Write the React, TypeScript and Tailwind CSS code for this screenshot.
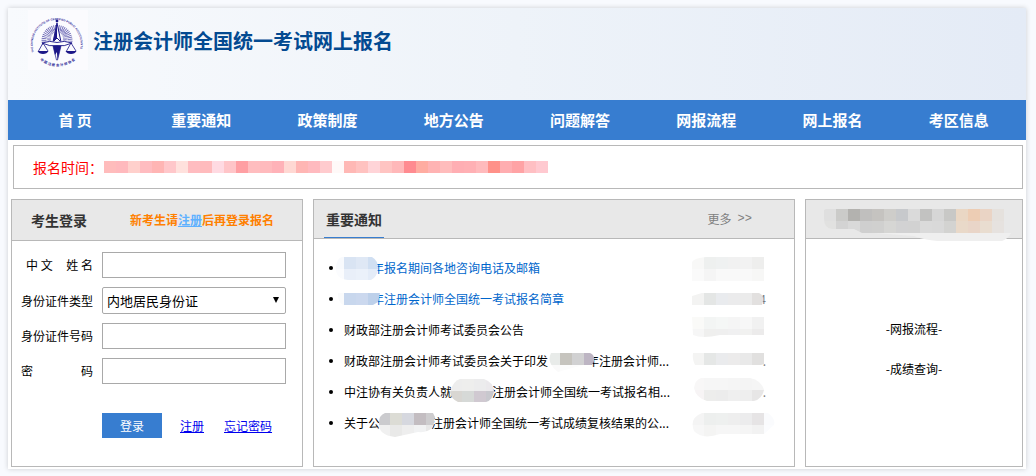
import React from 'react'

interface MosaicProps {
    rows: string[][]
    x: number
    y: number
    id: string
    clip: string
}

interface Notice {
    before: string
    after: string
    highlight?: boolean
    gap?: string
    mosaic?: MosaicProps
    tail?: string
    date: MosaicProps
}

const CELL = 12

const navItems = ['首 页', '重要通知', '政策制度', '地方公告', '问题解答', '网报流程', '网上报名', '考区信息']

const timeCells = [
    '#ffbcbc', '#ffb9bd', '#ffd0cc', '#ffbcc0', '#ffb5b4', '#ffc7ca', '#ffe1dd', '#ffbcc0', '#ffbbbd', '#ffdae2',
    '#ffc5c8', '#ff9fa3', '#ffbdbf', '#ffbabd', '#ffb2b8', '#ffd8d3', '#ffb6b4', '#ffbabf', '#ffcbce', '#fff9f8',
    '#ffb8b5', '#ffc2c0', '#ffd4d8', '#ffc4c2', '#ffb8b9', '#ff8b90', '#ffaca1', '#ffb3b3', '#ffbcbc', '#ffaeb3',
    '#ffb0b4', '#ffbabc', '#ff9189', '#ffadb0', '#ffa3a5', '#ffbfc3', '#ffc9d0',
]

const notices: Notice[] = [
    {
        before: '',
        after: '年报名期间各地咨询电话及邮箱',
        highlight: true,
        gap: 'w-7',
        mosaic: {
            id: 'n0', x: -12, y: -2,
            rows: [['#f8fafd', '#d9e4f3', '#dfe8f5', '#d0dff2'], ['#fbfcfe', '#e9eff9', '#ebf1fa', '#e4ecf8']],
            clip: 'M10 0H40Q46 3 46 12Q45 20 39 23H16Q3 22 4 10Q5 1 10 0Z',
        },
        date: {
            id: 'd0', x: 0, y: 5,
            rows: [['#f8f8f7', '#eef0ef', '#eff1f1', '#f1f1f1', '#f2f2f2', '#eeeeed'], ['#fafafa', '#f5f5f5', '#f9f9f9', '#f9f9f9', '#f9f9f9', '#f7f7f6']],
            clip: 'M0 5Q2 1 14 0H72V24H0Z',
        },
    },
    {
        before: '',
        after: '年注册会计师全国统一考试报名简章',
        highlight: true,
        gap: 'w-7',
        mosaic: {
            id: 'n1', x: -12, y: 3,
            rows: [['#fafbfc', '#c8d7ed', '#cbd8ee', '#bdd0ea']],
            clip: 'M6 0H48L46 9L41 12H11Q5 8 6 0Z',
        },
        tail: '4',
        date: {
            id: 'd1', x: 0, y: 10,
            rows: [['#f3f3f2', '#e4e6e5', '#e9ebee', '#ebebec', '#ebebeb', '#e2e0df']],
            clip: 'M0 3L10 0H67Q72 2 71 8L70 12H0Z',
        },
    },
    {
        before: '财政部注册会计师考试委员会公告',
        after: '',
        date: {
            id: 'd2', x: 0, y: 3,
            rows: [['#fafaf8', '#f3f5f4', '#f5f7f6', '#f5f5f5', '#f7f7f7', '#f1f1f1'], ['#f6f6f6', '#efefee', '#efefef', '#f0f0f1', '#f1f1f0', '#ecebeb']],
            clip: 'M0 0H72V18H28Q10 22 1 18Z',
        },
    },
    {
        before: '财政部注册会计师考试委员会关于印发',
        after: '年注册会计师...',
        gap: 'w-[39px]',
        mosaic: {
            id: 'n3', x: 0, y: 1,
            rows: [['#e8ebe9', '#c6c4be', '#d1d1d2', '#bdb5c3'], ['#fafafa', '#fcfcfc', '#fcfcfc', '#ffffff']],
            clip: 'M3 0H42Q47 2 46 8L44 12H36Q20 16 10 19Q-2 10 3 0Z',
        },
        tail: '.',
        date: {
            id: 'd3', x: 0, y: 8,
            rows: [['#f4f4f3', '#e5e7e6', '#eaebed', '#ecebeb', '#e9e9e9', '#e1e0df']],
            clip: 'M1 0H72V11L69 12H3Q0 6 1 0Z',
        },
    },
    {
        before: '中注协有关负责人就',
        after: '注册会计师全国统一考试报名相...',
        gap: 'w-10',
        mosaic: {
            id: 'n4', x: -2, y: -4,
            rows: [['#ededed', '#eeeeed', '#ececed', '#ebe9ec'], ['#d8d6d2', '#d6d9d7', '#d0c9d1', '#c8c8ce']],
            clip: 'M10 0H34Q43 3 44 12Q43 21 36 23H8Q1 20 0 13Q3 2 10 0Z',
        },
        tail: '.',
        date: {
            id: 'd4', x: 0, y: 2,
            rows: [['#f8f7f7', '#f6f6f6', '#f6f6f6', '#f5f5f5', '#f4f4f4', '#f5f5f5'], ['#f7f4f5', '#ededec', '#ececec', '#efefef', '#eeeeee', '#e7e6e6']],
            clip: 'M9 0H58Q69 2 72 12Q70 21 62 23H15Q4 20 2 10Q3 2 9 0Z',
        },
    },
    {
        before: '关于公',
        after: '注册会计师全国统一考试成绩复核结果的公...',
        gap: 'w-[51px]',
        mosaic: {
            id: 'n5', x: -2, y: -1,
            rows: [['#cbcbce', '#dcdcd5', '#d6d8df', '#c3bdc1', '#cdccce'], ['#f0f0f0', '#e9e9e8', '#eeeeee', '#f1f2f3', '#e8e8e8']],
            clip: 'M7 0H55L57 4L55 14Q50 20 40 19L17 24Q0 22 1 10Q1 2 7 0Z',
        },
        date: {
            id: 'd5', x: 0, y: 6,
            rows: [['#f4f4f4', '#edefee', '#eef0ef', '#eeeeee', '#ececed', '#e6e4e5', '#fafbfd'], ['#f7f7f7', '#f4f4f3', '#f6f6f6', '#f6f6f6', '#f5f5f5', '#f2f2f2', '#fbfcfe']],
            clip: 'M10 0H76Q84 6 82 12L72 21H28Q10 27 2 18Q-3 5 10 0Z',
        },
    },
]

const bannerRows = [
    ['#dfdfdf', '#cbcbc9', '#b3b2af', '#c0bfbe', '#c5c3c0', '#cecdca', '#c7c9cc', '#dadada', '#c2c2c1', '#d6d6d6', '#c8c8c6', '#ead7c4', '#edcdb4', '#ead4c5', '#e5e1dd'],
    ['#e1e1e0', '#d3d3d3', '#d9d9d9', '#cfcfcf', '#d0d0cf', '#d6d6d4', '#d2d2d3', '#d2d2d2', '#dadada', '#d9d9d9', '#d3d3d1', '#e9d9c9', '#e9d5c8', '#e9ddd0', '#e6e2df'],
]

const Mosaic: React.FC<MosaicProps> = ({ rows, x, y, id, clip }) => (
    <g transform={`translate(${x} ${y})`}>
        <clipPath id={id}>
            <path d={clip} />
        </clipPath>
        <g clipPath={`url(#${id})`} shapeRendering="crispEdges">
            {rows.map((row, r) =>
                row.map((fill, c) => (
                    <rect key={`${r}-${c}`} x={c * CELL} y={r * CELL} width={CELL} height={CELL} fill={fill} />
                ))
            )}
        </g>
    </g>
)

const Logo = () => (
    <svg viewBox="0 0 60 60" className="h-[60px] w-[60px] overflow-visible bg-[#fbfbfe]" aria-hidden="true">
        <defs>
            <path id="ring" d="M6 42A24 24 0 1 1 50.5 44" />
            <path id="foot" d="M12 50A27 27 0 0 0 50 47" />
        </defs>
        <g fill="#2c2596" fontFamily="Liberation Sans, Noto Sans CJK SC, sans-serif" fontWeight="bold">
            <text fontSize="2.8">
                <textPath href="#ring">THE CHINESE INSTITUTE OF CERTIFIED PUBLIC ACCOUNTANTS</textPath>
            </text>
            <text fontSize="3.4">
                <textPath href="#foot">中 国 注 册 会 计 师 协 会</textPath>
            </text>
        </g>
        {/* sun rays */}
        <g fill="none" stroke="#6a66b4">
            <path d="M16.5 34A13 13 0 1 1 41.5 34" strokeWidth="5" strokeDasharray="0.8 0.9" />
            <path d="M21.5 31A8 8 0 1 1 36.5 31" strokeWidth="4" strokeDasharray="0.6 0.7" />
        </g>
        {/* compass and blade */}
        <path d="M29 13L25 32L29 28L33 32Z" fill="#fbfbfe" stroke="#1c1788" strokeWidth="1" />
        <path d="M29 13L25 32L29 28Z" fill="#1c1788" />
        <circle cx="29" cy="11" r="1.4" fill="#1c1788" />
        <path d="M25 36H33L29.5 50H28.5Z" fill="#fbfbfe" stroke="#1c1788" strokeWidth="0.7" />
        <path d="M28.5 36H33L29.5 50Z" fill="#1c1788" />
        <path d="M25 36H29V42L27 45Z" fill="#1c1788" />
        {/* scales */}
        <path d="M14 33Q22 30 29 32.5Q36 30 44 33Q36 37 29 35.5Q22 37 14 33Z" fill="#fbfbfe" stroke="#1c1788" strokeWidth="0.9" />
        <path d="M15 33L10.5 41M15 33L20 41M43 33L38.5 41M43 33L48 41" fill="none" stroke="#1c1788" strokeWidth="0.8" />
        <path d="M9.5 41H20.5Q19 44 15 44T9.5 41ZM37.5 41H48.5Q47 44 43 44T37.5 41Z" fill="#1c1788" />
    </svg>
)

const Header = () => (
    <header className="flex h-[92px] items-start bg-linear-to-r from-[#f8fafd] via-[#eef3f9] to-[#e4ebf6] pt-0.5 pl-5">
        <Logo />
        <h1 className="mt-4 ml-[5px] text-xl leading-[30px] font-bold text-[#034a91]">注册会计师全国统一考试网上报名</h1>
    </header>
)

const Nav = () => (
    <nav className="grid h-10 grid-cols-8 items-center bg-[#377dd0] px-1 text-center text-[15px] font-bold text-white">
        {navItems.map((item) => (
            <a key={item} href="#">{item}</a>
        ))}
    </nav>
)

const fieldClass = 'h-[26px] w-full border border-[#a9a9a9] bg-white px-1 text-[13px] outline-none'

const LoginPanel = () => (
    <section className="border border-[#b8b8b8]">
        <div className="flex h-[41px] items-center justify-between border-b border-[#b8b8b8] bg-[#e8e8e8] pr-7 pl-[19px] font-bold">
            <h2 className="text-sm text-[#333]">考生登录</h2>
            <p className="text-xs text-[#ff8000]">
                新考生请<a href="#" className="text-[#5eb1ff] underline">注册</a>后再登录报名
            </p>
        </div>
        <form className="pt-[11px] pr-4 pb-7 pl-[9px]" onSubmit={(e) => e.preventDefault()}>
            <div className="grid grid-cols-[72px_1fr] items-center gap-x-[9px] gap-y-[9px]">
                <label htmlFor="name" className="flex justify-between pl-[5px]">
                    <span>中 文</span>
                    <span>姓 名</span>
                </label>
                <input id="name" type="text" className={fieldClass} />

                <label htmlFor="idType">身份证件类型</label>
                <div className="relative">
                    <select
                        id="idType"
                        className="block h-[27px] w-full appearance-none rounded-xs border border-[#a9a9a9] bg-white px-1 text-[13px] outline-none"
                    >
                        <option>内地居民身份证</option>
                    </select>
                    <svg viewBox="0 0 6 6" className="pointer-events-none absolute top-2.5 right-[7px] h-1.5 w-1.5">
                        <path d="M0 0H6L3 6Z" />
                    </svg>
                </div>

                <label htmlFor="idNumber">身份证件号码</label>
                <input id="idNumber" type="text" className={fieldClass} />

                <label htmlFor="password" className="flex justify-between">
                    <span>密</span>
                    <span>码</span>
                </label>
                <input id="password" type="password" className={fieldClass} />
            </div>
            <div className="mt-[29px] flex items-center pl-[81px]">
                <button type="submit" className="h-[25px] w-[60px] bg-[#377dd0] text-xs text-white">登录</button>
                <a href="#" className="ml-[18px] text-[#0000ee] underline">注册</a>
                <a href="#" className="ml-5 text-[#0000ee] underline">忘记密码</a>
            </div>
        </form>
    </section>
)

const NoticePanel = () => (
    <section className="border border-[#b8b8b8]">
        <div className="flex h-[39px] items-stretch justify-between border-b border-[#b8b8b8] bg-[#e8e8e8] pr-[42px] pl-2.5">
            <h2 className="flex items-center border-b border-[#377dd0] px-0.5 text-sm font-bold text-[#333]">重要通知</h2>
            <a href="#" className="flex items-center gap-1.5 text-[#808080]">
                更多<span className="font-['Liberation_Mono',monospace]">&gt;&gt;</span>
            </a>
        </div>
        <ul className="pt-[13px] pr-[18px] pl-[15px]">
            {notices.map((notice) => (
                <li key={notice.date.id} className="flex h-[31px] items-center">
                    <span className="mr-[11px] h-1 w-1 shrink-0 rounded-full bg-black" />
                    <a href="#" className={`flex items-center whitespace-nowrap ${notice.highlight ? 'text-[#0066cc]' : 'text-black'}`}>
                        {notice.before}
                        {notice.mosaic && (
                            <span className={`relative h-[18px] ${notice.gap}`}>
                                <svg className="absolute top-0 left-0 h-[18px] w-full overflow-visible">
                                    <Mosaic {...notice.mosaic} />
                                </svg>
                            </span>
                        )}
                        {notice.after}
                    </a>
                    <span className="relative ml-auto flex h-[31px] w-[84px] shrink-0 items-center justify-end pr-[10px] text-[#808080]">
                        {notice.tail}
                        <svg className="absolute inset-0 h-full w-full overflow-visible">
                            <Mosaic {...notice.date} />
                        </svg>
                    </span>
                </li>
            ))}
        </ul>
    </section>
)

const QuickPanel = () => (
    <section className="border border-[#b8b8b8]">
        <div className="relative h-[39px] border-b border-[#b8b8b8] bg-[#e8e8e8] pt-[9px] pl-[18px]">
            <svg viewBox="0 0 188 34" className="h-[34px] w-[188px]">
                <path d="M42 20L50 24L90 27Q96 30 113 32H178Q184 30 187 24H170Z" fill="#efefef" />
                <Mosaic id="banner" x={0} y={0} rows={bannerRows} clip="M2 0H180V24H38L30 20H8Q0 19 0 10V1Z" />
            </svg>
        </div>
        <div className="flex flex-col items-center pt-[70px] leading-10">
            <a href="#">-网报流程-</a>
            <a href="#">-成绩查询-</a>
        </div>
    </section>
)

export default function App() {
    return (
        <div className="min-h-screen bg-[#f8fafe] pt-2 pr-2.5 pb-[7px] pl-2 font-['Noto_Sans_CJK_SC',sans-serif] text-xs text-black">
            <div className="bg-white pb-0.5 shadow-[0_0_5px_rgba(0,0,0,0.18)]">
                <Header />
                <Nav />
                <div className="mt-[5px] mr-[3px] ml-[5px] flex h-11 items-center border border-[#b8b8b8] pl-[19px]">
                    <span className="w-[71px] text-sm whitespace-nowrap text-[#ff0000]">报名时间：</span>
                    <svg viewBox="0 0 444 12" className="h-3 w-[444px]" shapeRendering="crispEdges">
                        {timeCells.map((fill, i) => (
                            <rect key={i} x={i * CELL} width={CELL} height={CELL} fill={fill} />
                        ))}
                    </svg>
                </div>
                <main className="mx-[3px] mt-2.5 grid grid-cols-[292fr_482fr_218fr] gap-2.5">
                    <LoginPanel />
                    <NoticePanel />
                    <QuickPanel />
                </main>
            </div>
        </div>
    )
}
